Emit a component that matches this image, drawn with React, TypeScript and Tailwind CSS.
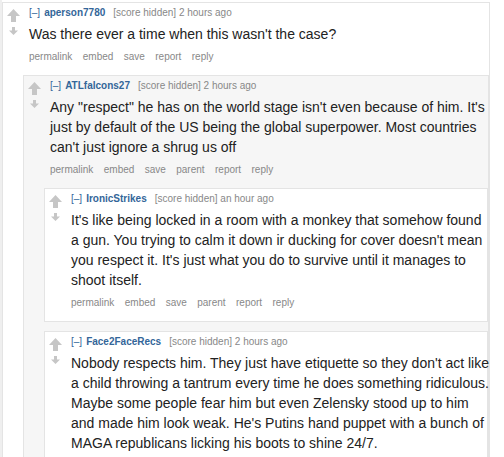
import React from "react";

const Up = () => (
  <svg width="13" height="13" viewBox="0 0 13 13" className="block">
    <path d="M6.5 0 L13 7 H9 V13 H4 V7 H0 Z" fill="#c6c6c6" />
  </svg>
);
const Down = () => (
  <svg width="9" height="8" viewBox="0 0 9 8" className="block">
    <path d="M3 0 H6 V3.5 H9 L4.5 8 L0 3.5 H3 Z" fill="#c6c6c6" />
  </svg>
);

type Props = {
  user: string;
  time: string;
  lines: string[];
  buttons?: string[];
  white: boolean;
  cls?: string;
  children?: React.ReactNode;
};

function Comment({ user, time, lines, buttons, white, cls = "", children }: Props) {
  return (
    <div
      className={`border border-[#e4e4e4] ${white ? "bg-white" : "bg-[#f6f6f6]"} ${cls}`}
    >
      <div className="flex pt-[4px] pb-[12px]">
        <div className="w-[26px] shrink-0 pl-[4px] pt-[2px]">
          <div className="w-[13px] flex flex-col items-center gap-[5px]">
            <Up />
            <Down />
          </div>
        </div>
        <div className="flex-1 min-w-0">
          <div className="text-[10px] leading-[12px] whitespace-nowrap">
            <span className="text-[#369]">[–]</span>
            <span className="ml-[4px] font-bold text-[#369]">{user}</span>
            <span className="ml-[8px] text-[#888]">[score hidden] {time}</span>
          </div>
          <div className="mt-[5px] text-[14px] leading-[20px] text-[#222]">
            {lines.map((l, i) => (
              <div key={i} className="whitespace-nowrap">
                {l}
              </div>
            ))}
          </div>
          {buttons ? (
            <div className="mt-[7px] flex gap-[10.4px] text-[10px] leading-[12px] text-[#888]">
              {buttons.map((b) => (
                <span key={b}>{b}</span>
              ))}
            </div>
          ) : null}
        </div>
      </div>
      {children ? <div className="ml-[20px]">{children}</div> : null}
    </div>
  );
}

const b1 = ["permalink", "embed", "save", "report", "reply"];
const b2 = ["permalink", "embed", "save", "parent", "report", "reply"];

export default function App() {
  return (
    <div className="w-[504px] h-[457px] overflow-hidden bg-white flex font-['Liberation_Sans',Arial,sans-serif]">
      <div className="w-[2px] shrink-0 bg-[#efefef]" />
      <div className="w-[488px] shrink-0 mt-[2px]">
        <Comment
          white
          user="aperson7780"
          time="2 hours ago"
          lines={["Was there ever a time when this wasn't the case?"]}
          buttons={b1}
        >
          <Comment
            white={false}
            user="ATLfalcons27"
            time="2 hours ago"
            lines={[
              'Any "respect" he has on the world stage isn\'t even because of him. It\'s',
              "just by default of the US being the global superpower. Most countries",
              "can't just ignore a shrug us off",
            ]}
            buttons={b2}
          >
            <Comment
              white
              user="IronicStrikes"
              time="an hour ago"
              lines={[
                "It's like being locked in a room with a monkey that somehow found",
                "a gun. You trying to calm it down ir ducking for cover doesn't mean",
                "you respect it. It's just what you do to survive until it manages to",
                "shoot itself.",
              ]}
              buttons={b2}
            />
            <Comment
              white
              cls="mt-[9px]"
              user="Face2FaceRecs"
              time="2 hours ago"
              lines={[
                "Nobody respects him. They just have etiquette so they don't act like",
                "a child throwing a tantrum every time he does something ridiculous.",
                "Maybe some people fear him but even Zelensky stood up to him",
                "and made him look weak. He's Putins hand puppet with a bunch of",
                "MAGA republicans licking his boots to shine 24/7.",
              ]}
            />
          </Comment>
        </Comment>
      </div>
    </div>
  );
}
